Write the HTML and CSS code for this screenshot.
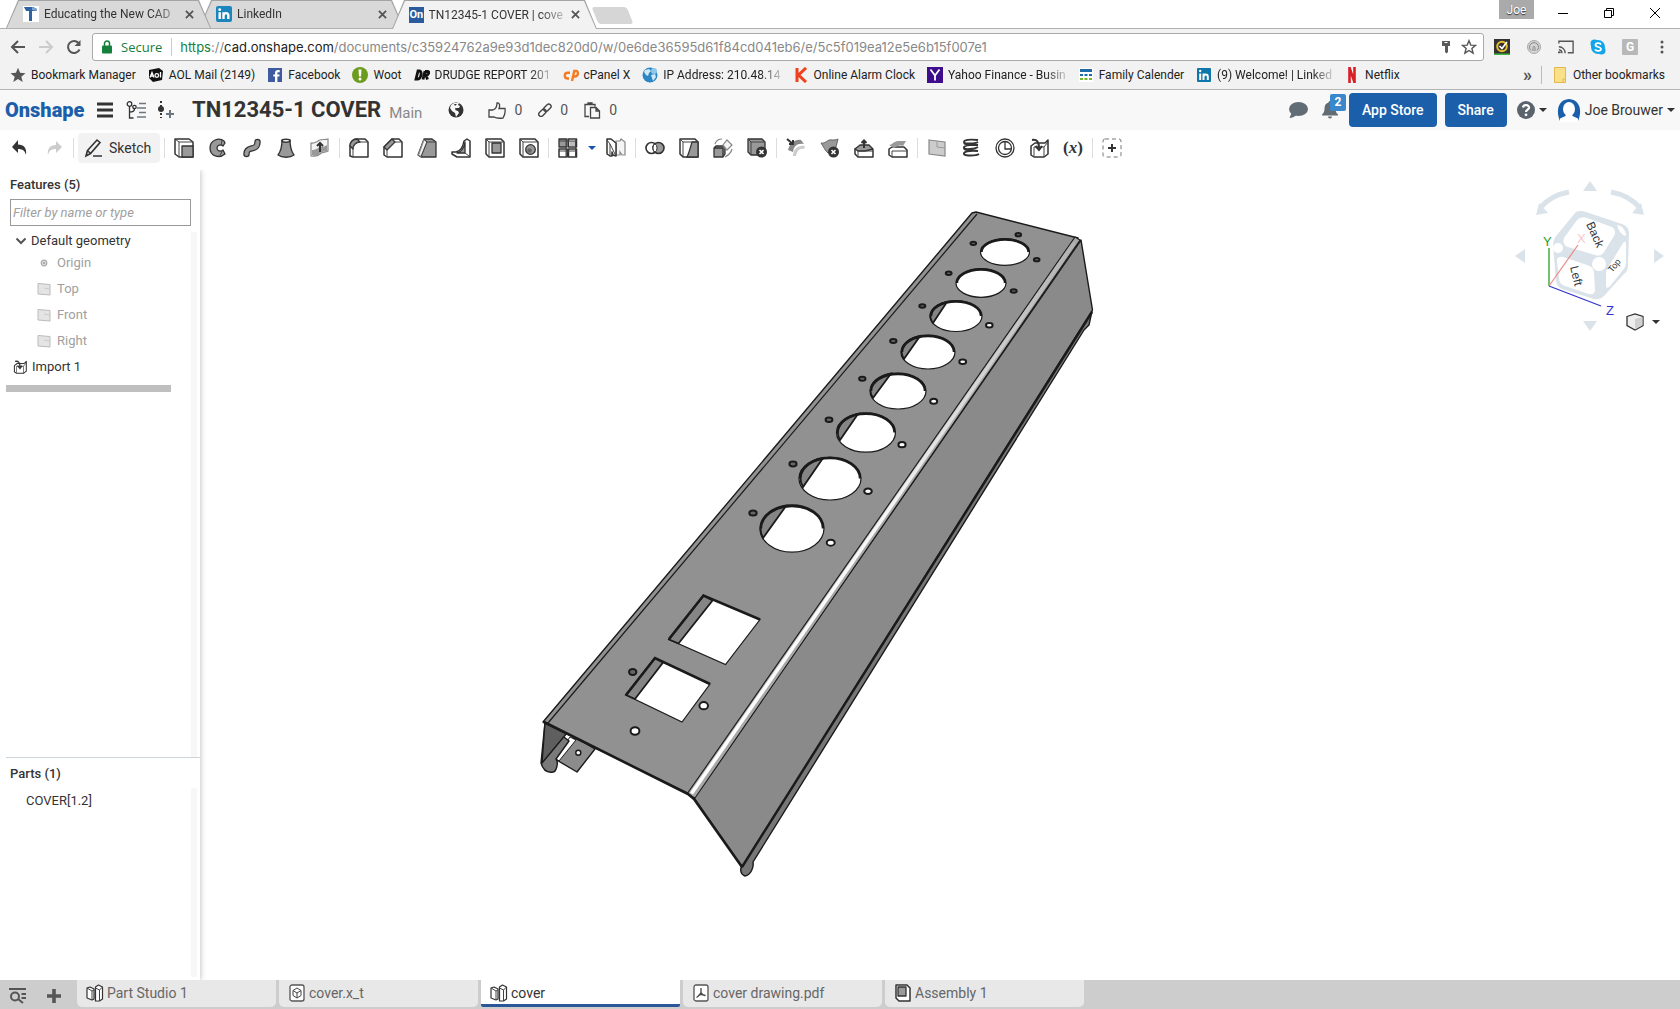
FILE: index.html
```html
<!DOCTYPE html>
<html lang="en">
<head>
<meta charset="utf-8">
<title>TN12345-1 COVER | cover</title>
<link rel="stylesheet" href="styles.css">
</head>
<body>
<header class="browser">
  <div class="tabstrip">
    <nav class="tabs" aria-label="Browser tabs">
      <div class="tab">
        <svg class="fav" viewBox="0 0 16 16"><path fill="#fff" d="M0 0h16v16H0z"/><path fill="#2d62a3" d="M1 1h9l4 2v2H9v10H6V5H3z"/><path fill="#7fa8d6" d="M9 1l5 2v2l-5-1z"/></svg>
        <a class="tab-title" href="#">Educating the New CAD</a><button class="tab-close" aria-label="Close tab"><svg viewBox="0 0 10 10"><path d="M1 1l8 8M9 1l-8 8"/></svg></button>
      </div>
      <div class="tab">
        <svg class="fav" viewBox="0 0 16 16"><rect width="16" height="16" rx="2" fill="#1b86bd"/><path fill="none" stroke="#fff" stroke-width="2.4" d="M3.7 6.3V13M7.5 6.3V13M7.5 10c0-4 4.800-3.500 4.800-.5V13"/><circle cx="3.700" cy="3.700" r="1.400" fill="#fff"/></svg>
        <a class="tab-title" href="#">LinkedIn</a><button class="tab-close" aria-label="Close tab"><svg viewBox="0 0 10 10"><path d="M1 1l8 8M9 1l-8 8"/></svg></button>
      </div>
      <div class="tab active">
        <span class="fav on">On</span>
        <a class="tab-title" href="#">TN12345-1 COVER | cove</a><button class="tab-close" aria-label="Close tab"><svg viewBox="0 0 10 10"><path d="M1 1l8 8M9 1l-8 8"/></svg></button>
      </div>
      <button class="newtab" aria-label="New tab"></button>
    </nav>
    <div class="window">
      <button class="profile">Joe</button>
      <button class="win" aria-label="Minimize"><svg viewBox="0 0 12 12"><path d="M1 6.500h10"/></svg></button>
      <button class="win" aria-label="Restore"><svg viewBox="0 0 12 12"><path d="M1.500 3.500h7v7h-7zM3.500 3V1.500h7v7H9"/></svg></button>
      <button class="win" aria-label="Close"><svg viewBox="0 0 12 12"><path d="M1 1l10 10M11 1L1 11"/></svg></button>
    </div>
  </div>
  <div class="navbar">
    <button class="nav" aria-label="Back"><svg viewBox="0 0 16 16"><path d="M15 8H2M8 2L2 8l6 6"/></svg></button>
    <button class="nav off" aria-label="Forward"><svg viewBox="0 0 16 16"><path d="M1 8h13M8 2l6 6-6 6"/></svg></button>
    <button class="nav" aria-label="Reload"><svg viewBox="0 0 16 16"><path d="M13.500 10.500A6 6 0 1 1 12.500 4"/><path class="solid" d="M14.500 1v6h-6z"/></svg></button>
    <div class="omnibox">
      <svg class="lock" viewBox="0 0 10 14"><rect y="5.500" width="10" height="8" rx="1" fill="#15803c"/><path d="M2.500 6V3.500a2.500 2.500 0 0 1 5 0V6" fill="none" stroke="#15803c" stroke-width="1.500"/></svg>
      <span class="secure">Secure</span>
      <span class="url"><span class="https">https</span>://<span class="host">cad.onshape.com</span>/documents/c35924762a9e93d1dec820d0/w/0e6de36595d61f84cd041eb6/e/5c5f019ea12e5e6b15f007e1</span>
      <svg class="key" viewBox="0 0 10 14"><path fill="#5a5a5a" d="M1 1h8v5H7v6l-1.500 1.500L4 12V6H1z"/><path stroke="#fff" d="M3.500 2.500h3"/></svg>
      <svg class="star" viewBox="0 0 16 16"><path fill="none" stroke="#555" stroke-width="1.400" d="M8 1.700l1.800 4.400 4.700.3-3.600 3 1.200 4.700L8 11.500l-4.100 2.600 1.200-4.700-3.600-3 4.700-.3z"/></svg>
    </div>
    <div class="exts">
      <svg viewBox="0 0 16 16"><path fill="#333" d="M0 0h16v16H0z"/><path fill="#3fb83f" d="M0 14.500h16V16H0z"/><circle cx="8" cy="7.500" r="4.800" fill="none" stroke="#e8c02a" stroke-width="2"/><path fill="none" stroke="#fff" stroke-width="1.700" d="M5.500 7l2.500 2.500L13 3"/></svg>
      <svg viewBox="0 0 16 16"><circle cx="8" cy="8" r="6.500" fill="#d4d4d4" stroke="#aaa"/><path fill="none" stroke="#888" d="M5 11.500a4.500 4.500 0 1 1 6 0M7 12V8.500a1 1 0 0 1 2 0V12"/></svg>
      <svg viewBox="0 0 18 16"><path fill="none" stroke="#555" stroke-width="1.500" d="M1 4V1.500h16v13h-6M1 11a4 4 0 0 1 3.500 4M1 7.700A7 7 0 0 1 8 15"/><path fill="#555" d="M0 13h1.500a1 1 0 0 1 1 2H0z"/></svg>
      <svg viewBox="0 0 16 16"><circle cx="8" cy="8" r="7" fill="#12a5e8"/><circle cx="4.500" cy="4.500" r="4" fill="#12a5e8"/><circle cx="11.500" cy="11.500" r="4" fill="#12a5e8"/><path fill="none" stroke="#fff" stroke-width="1.800" d="M11 5.500C10 3.500 5.500 3.700 5.500 6c0 2.500 5.500 1.500 5.500 4 0 2.300-5 2.500-6 .3"/></svg>
      <span class="ext-g">G</span>
      <svg viewBox="0 0 16 16"><g fill="#555"><circle cx="8" cy="3" r="1.500"/><circle cx="8" cy="8" r="1.500"/><circle cx="8" cy="13" r="1.500"/></g></svg>
    </div>
  </div>
  <nav class="bookmarks" aria-label="Bookmarks">
    <a href="#"><svg viewBox="0 0 16 16"><path fill="#555" d="M8 .8l2.100 5 5.400.4-4.200 3.500 1.400 5.300L8 12.100 3.300 15l1.400-5.300L.5 6.200l5.400-.4z"/></svg>Bookmark Manager</a>
    <a href="#"><svg viewBox="0 0 16 16"><path fill="#111" d="M1 3l10-2 4 3-1 9-9 2-4-4z"/><path fill="none" stroke="#fff" stroke-width="1.300" d="M2 10.500l2-5 2 5M3 9h2.500M12.500 5v5.500"/><circle cx="8.800" cy="8.500" r="1.800" fill="none" stroke="#fff" stroke-width="1.300"/></svg>AOL Mail (2149)</a>
    <a href="#"><svg viewBox="0 0 16 16"><path fill="#3f5ba0" d="M1 1h14v14H1z"/><path fill="#fff" d="M8 15V9.500H6.300v-2H8V6c0-2 1-3 3-3h1.700v2.200h-1.300c-.8 0-1 .4-1 1v1.300h2.200l-.3 2h-1.900V15z"/></svg>Facebook</a>
    <a href="#"><svg viewBox="0 0 16 16"><circle cx="8" cy="8" r="8" fill="#6b9c1d"/><path fill="#fff" d="M6.500 2.500h3L9 9.500H7z"/><circle cx="8" cy="12" r="1.500" fill="#fff"/></svg>Woot</a>
    <a href="#"><svg viewBox="0 0 16 16"><path fill="none" stroke="#111" stroke-width="2.800" d="M4 4L2 12h2c3 0 4.500-8 1.500-8zM11 4L9 12.500M11 4.500h2.500c2.500 0 1 3.500-1 3.500h-2M12 8l1.500 4.500"/></svg><span class="cut">DRUDGE REPORT 201</span></a>
    <a href="#"><svg viewBox="0 0 16 16"><path fill="none" stroke="#f47b20" stroke-width="2.400" d="M7 5.800H4.800c-4 0-4 5.700 0 5.700H6M9 14l2.300-10H13c3 0 2.500 5.500-1 5.500h-1"/></svg>cPanel X</a>
    <a href="#"><svg viewBox="0 0 16 16"><circle cx="8" cy="8" r="7.500" fill="#2c86c4"/><path fill="#cfe8f5" d="M3 3l4-1 2 2-2 2-1 3-2-1-2-3zM9 8l4-1 1 3-3 4-1-3z"/><circle cx="12" cy="4" r="3" fill="#8fc6ea"/></svg><span class="cut">IP Address: 210.48.14</span></a>
    <a href="#"><svg viewBox="0 0 16 16"><path fill="none" stroke="#f0401c" stroke-width="3" d="M4 1v14M13 1L5.500 8l7.500 7"/></svg>Online Alarm Clock</a>
    <a href="#"><svg viewBox="0 0 16 16"><path fill="#3d0d8c" d="M0 0h16v16H0z"/><path fill="none" stroke="#fff" stroke-width="1.800" d="M3.500 2.500L8 8.500l4.500-6M8 8v5.500"/></svg><span class="cut">Yahoo Finance - Busin</span></a>
    <a href="#"><svg viewBox="0 0 16 16"><path fill="#fff" d="M1 1h14v14H1z"/><path fill="#1c6aa8" d="M2 2h12v3H2z"/><path stroke="#1c6aa8" stroke-width="2" stroke-dasharray="3 1.500" d="M2 8h12"/><path stroke="#76b82a" stroke-width="2" stroke-dasharray="3 1.500" d="M2 12h12"/></svg>Family Calender</a>
    <a href="#"><svg viewBox="0 0 16 16"><rect x="1" y="1" width="14" height="14" rx="1" fill="#0e76a8"/><path fill="none" stroke="#fff" stroke-width="2" d="M4.200 6.500V13M7.500 6.500V13M7.500 10c0-3.500 4.300-3 4.300-.5V13"/><circle cx="4.200" cy="4" r="1.200" fill="#fff"/></svg><span class="cut">(9) Welcome! | Linked</span></a>
    <a href="#"><svg viewBox="0 0 16 16"><path fill="none" stroke="#d81f26" stroke-width="2.600" d="M5.500 0v16M10.500 0v16M5.200 0l5.600 16"/></svg>Netflix</a>
    <span class="more">»</span>
    <a class="other" href="#"><svg viewBox="0 0 16 16"><path fill="#fbe08a" stroke="#e3b94d" d="M2.500.5h11v15h-11zM11 15.500V12h2.500"/></svg>Other bookmarks</a>
  </nav>
</header>

<header class="doc">
  <a class="logo" href="#">Onshape</a>
  <button class="ib" aria-label="Menu"><svg width="18" height="18" viewBox="0 0 18 18"><path stroke="#333" stroke-width="3" d="M1 3h16M1 9h16M1 15h16"/></svg></button>
  <button class="ib" aria-label="Document tree"><svg width="20" height="18" viewBox="0 0 20 18"><g fill="none" stroke="#333" stroke-width="1.300"><circle cx="3.500" cy="3" r="2.300"/><path d="M3.500 5.500V17h4M3.500 11c4 0 5-1 5-3"/><circle cx="8.500" cy="6" r="1.700"/></g><path stroke="#6b7680" stroke-width="1.600" d="M13 2.500h7M11 7h9M13 11.500h7M11 16h9"/></svg></button>
  <button class="ib" aria-label="Create version"><svg width="18" height="20" viewBox="0 0 18 20"><path stroke="#333" stroke-width="2" stroke-dasharray="2 2" d="M3 1v17"/><circle cx="3" cy="9" r="3" fill="#333"/><path stroke="#6b7680" stroke-width="2" d="M8 14h8M12 10v8"/></svg></button>
  <h1>TN12345-1 COVER</h1><span class="branch">Main</span>
  <svg class="globe" viewBox="0 0 16 16"><circle cx="8" cy="8" r="7.500" fill="#333"/><path fill="#f8f8f8" d="M6 1l5 0-1 2 2 1-1 2-2 0-2 2 3 1 1 2-3 4-1-4-3-2-2-3 1-3z"/><path fill="#333" d="M6 2l3 0-2 2zM7 6l2 0-1 2z"/></svg>
  <div class="stat"><svg width="18" height="17" viewBox="0 0 18 17"><path fill="none" stroke="#444" stroke-width="1.300" d="M1 8h4c3-1 4-4 4-7 3-.5 3 3 2 5.500h6c.5 3-.5 7-2 9.500-4 .5-7 .3-9-1H1z"/></svg>0</div>
  <div class="stat"><svg width="14" height="14" viewBox="0 0 14 14"><g fill="none" stroke="#444" stroke-width="1.400" transform="rotate(-45 7 7)"><rect x="-1" y="4.800" width="8.500" height="4.600" rx="2.300"/><rect x="6" y="4.800" width="8.500" height="4.600" rx="2.300"/></g></svg>0</div>
  <div class="stat"><svg width="17" height="17" viewBox="0 0 17 17"><path fill="none" stroke="#444" stroke-width="1.300" d="M5 14.500H1v-12h10v2M4 2.500V1h4v1.500M6.500 5.500h5.500l3.500 3.500v7h-9zM12 5.500V9h3.500"/></svg>0</div>
  <div class="account">
    <button class="ib" aria-label="Comments"><svg width="20" height="18" viewBox="0 0 20 18"><ellipse cx="10.500" cy="8" rx="9.500" ry="7" fill="#626c75"/><path fill="#626c75" d="M4 11l-2.500 6c3 0 5.500-1.500 7-3z"/></svg></button>
    <button class="ib bell" aria-label="Notifications"><svg width="18" height="18" viewBox="0 0 18 18"><path fill="#626c75" d="M7.500 1.500a1.500 1.500 0 0 1 3 0c3 1 4 3 4 6 0 3.500 1 4.500 2.500 6v1H1v-1c1.500-1.500 2.500-2.500 2.500-6 0-3 1-5 4-6zM7 15.500h4a2 2 0 0 1-4 0z"/></svg><span class="badge">2</span></button>
    <button class="blue">App Store</button>
    <button class="blue share">Share</button>
    <button class="ib help" aria-label="Help"><svg width="18" height="18" viewBox="0 0 18 18"><circle cx="9" cy="9" r="9" fill="#5b646c"/><path fill="none" stroke="#fff" stroke-width="2.200" d="M6 6.500c.5-3.500 6.500-3 6 .5-.3 1.500-3 2-3 4"/><circle cx="9" cy="13.800" r="1.400" fill="#fff"/></svg><i class="caret"></i></button>
    <button class="ib user"><svg width="24" height="24" viewBox="0 0 24 24"><path fill="#1b5faa" d="M3 23C-1 14 0 2 12 1c12 1 13 13 9 22z"/><ellipse cx="12" cy="11" rx="6" ry="7" fill="#fff"/><path fill="#fff" d="M9 15h6l.5 3 5.500 2.500V24H3v-3.500L8.500 18z"/></svg>Joe Brouwer<i class="caret"></i></button>
  </div>
</header>

<div class="toolbar" role="toolbar" aria-label="Features">
  <button aria-label="Undo"><svg viewBox="0 0 20 20"><path fill="#333" d="M8 2v4.500c6 0 9 4 8 10.500-1-4-3-6-8-6v4L2 9z"/></svg></button>
  <button aria-label="Redo"><svg viewBox="0 0 20 20"><path fill="#ccc" d="M12 3v4c-6 0-9 4-8 10 1-4 3-6 8-6v4l6-6z"/></svg></button>
  <i class="sep"></i>
  <button class="sketch"><svg viewBox="0 0 20 20"><path fill="none" stroke="#333" stroke-width="1.600" d="M3.500 12.500L13 2l3 2.500-9.500 11L2 18zM3.500 12.500l3 3M9 18h9"/></svg>Sketch</button>
  <i class="sep"></i>
  <button aria-label="Extrude"><svg viewBox="0 0 20 20"><path class="o" d="M1 1h14l4 3v15H5l-4-3z"/><path class="l" d="M1 1l4 3h14M5 4v15"/><path class="g" d="M8 8h11v11H8z"/></svg></button>
  <button aria-label="Revolve"><svg viewBox="0 0 20 20"><path class="g" d="M16 3C11-1 2 2 2 10s9 11 15 6l-2-4c-3 2-6 1-6-2s4-4 6-2l2-3z"/><path class="l" d="M14 2l-1 6M15 12l-3 5"/></svg></button>
  <button aria-label="Sweep"><svg viewBox="0 0 20 20"><path fill="none" stroke="#333" stroke-width="6.500" stroke-linecap="round" d="M4.500 16c0-9 11-2 11-12"/><path fill="none" stroke="#999" stroke-width="4" stroke-linecap="round" d="M4.500 16c0-9 11-2 11-12"/></svg></button>
  <button aria-label="Loft"><svg viewBox="0 0 20 20"><path class="g" d="M6 2h8c0 6 1 11 4 15-4 3-12 3-16 0C5 13 6 8 6 2z"/><ellipse class="o" cx="10" cy="2.800" rx="4" ry="1.500"/></svg></button>
  <button aria-label="Thicken"><svg viewBox="0 0 20 20"><path class="w" d="M1 5c4 1 6-2 9-3s5 0 8-1v12c-3 2-5 0-8 3s-5 2-9 2z"/><path fill="#999" d="M2 12c4 0 5-2 8-3s5 0 7-2v6c-3 1-5 0-8 3s-4 2-7 1z"/><path class="k" d="M10 14V6M7 8l3-3 3 3"/></svg></button>
  <i class="sep"></i>
  <button aria-label="Fillet"><svg viewBox="0 0 20 20"><path class="o" d="M1 18V8c0-4 3-7 7-7h8l3 3v15H4z"/><path class="g" d="M1 8c0-4 3-7 7-7l3 3c-4 0-7 3-7 7z"/><path class="l" d="M4 19v-8c0-4 3-7 7-7h8"/></svg></button>
  <button aria-label="Chamfer"><svg viewBox="0 0 20 20"><path class="o" d="M1 17V9l8-8h7l3 3v15H4z"/><path class="g" d="M1 9l8-8 3 3-8 8z"/><path class="l" d="M4 19v-7l8-8h7"/></svg></button>
  <button aria-label="Draft"><svg viewBox="0 0 20 20"><path class="g" d="M1 17L7 1h8l4 3v15H4z"/><path class="w" d="M1.500 17L7 1.500 10 4 4 18.500z"/><path class="l" d="M7 1l3 3h9M10 4L4 19"/></svg></button>
  <button aria-label="Rib"><svg viewBox="0 0 20 20"><path class="o" d="M1 14h4c5-1 7-5 8-11l3-2 3 2v16H6l-5-3z"/><path class="g" d="M6 15c5-1 7-5 8-11v11z"/><path class="l" d="M14 15l4 3"/></svg></button>
  <button aria-label="Shell"><svg viewBox="0 0 20 20"><path class="o" d="M1 1h15l3 3v15H4l-3-3z"/><path class="l" d="M1 1l3 3h15M4 4v15"/><path class="g" d="M7 5h9v10H7z"/></svg></button>
  <button aria-label="Hole"><svg viewBox="0 0 20 20"><path class="o" d="M1 1h15l3 3v15H4l-3-3z"/><path class="l" d="M1 1l3 3h15M4 4v15"/><circle class="g" cx="11.500" cy="11.500" r="4.800"/><circle cx="10.500" cy="12.500" r="2.300" fill="#666"/></svg></button>
  <i class="sep"></i>
  <button aria-label="Pattern"><svg viewBox="0 0 20 20"><path class="g" d="M1 1h8v8H1z"/><path class="o" d="M10.500 1h8v8h-8zM1 11h8v8H1zM10.500 11h8v8h-8z"/><path fill="#bbb" d="M12 3h6v5h-6z"/><path class="l" d="M1 3h18M1 13h18M8 2v17M17.500 2v17"/></svg></button>
  <button class="drop" aria-label="More patterns"><i class="caret"></i></button>
  <button aria-label="Mirror"><svg viewBox="0 0 20 20"><path class="w" d="M10 3h4l1-2 4 3v13h-3l-2-3v3h-4z"/><path class="o" d="M1 1h4l5 4v13l-3-1-1-3v4H4l-3-2z"/><path class="l" d="M4 17V6l6 12M1 2l3 4"/></svg></button>
  <i class="sep"></i>
  <button aria-label="Boolean"><svg viewBox="0 0 20 20"><circle cx="6.500" cy="10" r="5.500" fill="#fff" stroke="#333" stroke-width="1.600"/><circle cx="13.500" cy="10" r="5.500" fill="#999" stroke="#333" stroke-width="1.600"/><path d="M10 5.700a5.500 5.500 0 0 1 0 8.600 5.500 5.500 0 0 1 0-8.600" fill="#fff" stroke="#333"/></svg></button>
  <button aria-label="Split"><svg viewBox="0 0 20 20"><path class="o" d="M1 1h15l3 3v15H4l-3-3z"/><path class="g" d="M13 4h6v15H8c2-4 3-8 5-15z"/><path class="l" d="M1 1l3 3h15M4 4v15"/></svg></button>
  <button aria-label="Transform"><svg viewBox="0 0 20 20"><path fill="none" stroke="#888" stroke-width="1.200" d="M2 6c1-3 3-5 7-5M19 11c-1 4-3 6-7 8"/><path class="g" d="M1 10h9v9H1zM1 10l2-2h9v8l-2 3"/><path class="w" d="M14 2l5 5-5 5-4-5z"/></svg></button>
  <button aria-label="Delete part"><svg viewBox="0 0 20 20"><path class="g" d="M1 1h14l3 3v13H4l-3-3z"/><path class="l" d="M1 1l3 3h14M4 4v13"/><circle cx="14.500" cy="14" r="5.500" fill="#333"/><path class="x" d="M12.500 12l4 4M16.500 12l-4 4"/></svg></button>
  <i class="sep"></i>
  <button aria-label="Modify fillet"><svg viewBox="0 0 20 20"><path fill="#888" d="M2 12C4 5 9 1 15 2l3 4C11 5 8 8 7 14z"/><path fill="#ccc" d="M7 18c0-7 5-11 12-10l-1 3c-5-1-7 2-8 7z"/><path class="k" d="M1 1l6 5M7 2v4H3"/></svg></button>
  <button aria-label="Delete face"><svg viewBox="0 0 20 20"><path fill="#999" stroke="#666" d="M1 5c5 1 6-4 11-3 2 0 4 0 6-1l-2 8-8 6C5 13 4 9 1 5z"/><circle cx="13.500" cy="14" r="5.500" fill="#333"/><path class="x" d="M11.500 12l4 4M15.500 12l-4 4"/></svg></button>
  <button aria-label="Move face"><svg viewBox="0 0 20 20"><path class="o" d="M1 11l5-2h9l4 3v7H4l-3-3z"/><path class="g" d="M1 11l5-4h9l4 4-8 2-7 0z"/><path class="k" d="M10 10V3M7.500 5L10 2.500 12.500 5"/><path class="l" d="M4 13h15M4 13v6"/></svg></button>
  <button aria-label="Replace face"><svg viewBox="0 0 20 20"><path class="o" d="M1 11l3-2h12l3 3v7H4l-3-2z"/><path fill="#999" d="M1 7c3 0 5-4 9-4h8l-3 5c-4-1-6 0-9 2z"/><path class="l" d="M4 13h15M4 13v6"/></svg></button>
  <i class="sep"></i>
  <button aria-label="Plane"><svg viewBox="0 0 20 20"><path fill="#ccc" stroke="#888" stroke-width="1.200" d="M2 2l16 2v14L2 16z"/><path fill="none" stroke="#999" d="M10 3v6l8 1"/></svg></button>
  <button aria-label="Helix"><svg viewBox="0 0 20 20"><path fill="none" stroke="#333" stroke-width="1.900" d="M17 2C8 1 3 2 3 4s11 2 14 0M3 4c0 3 3 3 14 3C8 6 2 8 3 10s11 1 14-1M3 10c0 3 5 2 14 3-9-1-15 1-14 3s12 2 15 0"/></svg></button>
  <button aria-label="Mate connector"><svg viewBox="0 0 20 20"><g fill="none" stroke="#333" stroke-width="1.300"><circle cx="10" cy="10" r="9"/><circle cx="10" cy="10" r="6.500"/><path d="M10 4v7h6"/></g></svg></button>
  <button aria-label="Import"><svg viewBox="0 0 20 20"><path class="o" d="M2 8l4-3h10l3-3v14l-4 3H5l-3-2z"/><path class="l" d="M5 18V9h10v10M15 9l4-5"/><path class="k" d="M3 2c5-1 7 2 7 8M6.500 8l3.500 4 3-4"/></svg></button>
  <button class="var" aria-label="Variable">(<i>x</i>)</button>
  <i class="sep"></i>
  <button aria-label="Add custom feature"><svg viewBox="0 0 20 20"><rect x="1" y="1" width="18" height="18" rx="2" fill="none" stroke="#777" stroke-dasharray="4 3"/><path stroke="#333" stroke-width="2" d="M10 6v8M6 10h8"/></svg></button>
</div>

<main class="work">
  <aside class="panel">
    <section class="features">
      <h2><label for="filter">Features (5)</label></h2>
      <input id="filter" type="text" placeholder="Filter by name or type">
      <div class="scroll">
        <ul class="tree">
          <li class="root"><svg viewBox="0 0 12 12"><path fill="none" stroke="#555" stroke-width="2" d="M1.500 3.500L6 8l4.500-4.500"/></svg>Default geometry</li>
          <li class="leaf"><svg viewBox="0 0 14 14"><circle cx="7" cy="7" r="2.800" fill="#ddd" stroke="#aaa" stroke-width="1.200"/><circle cx="7" cy="7" r="1" fill="#999"/></svg>Origin</li>
          <li class="leaf"><svg viewBox="0 0 14 14"><path fill="#e4e4e4" stroke="#bbb" d="M1 1.500l12 1v10.500l-12-1z"/><path stroke="#ccc" d="M7 6l6 1"/></svg>Top</li>
          <li class="leaf"><svg viewBox="0 0 14 14"><path fill="#e4e4e4" stroke="#bbb" d="M1 1.500l12 1v10.500l-12-1z"/><path stroke="#ccc" d="M7 6l6 1"/></svg>Front</li>
          <li class="leaf"><svg viewBox="0 0 14 14"><path fill="#e4e4e4" stroke="#bbb" d="M1 1.500l12 1v10.500l-12-1z"/><path stroke="#ccc" d="M7 6l6 1"/></svg>Right</li>
          <li class="import"><svg viewBox="0 0 20 20"><path class="o" d="M2 8l4-3h10l3-3v14l-4 3H5l-3-2z"/><path class="l" d="M5 18V9h10v10M15 9l4-5"/><path class="k" d="M3 2c5-1 7 2 7 8M6.500 8l3.500 4 3-4"/></svg>Import 1</li>
        </ul>
        <div class="rollback"></div>
      </div>
    </section>
    <section class="parts">
      <h2>Parts (1)</h2>
      <div class="scroll"><ul><li>COVER[1.2]</li></ul></div>
    </section>
  </aside>

  <section class="view" aria-label="Model">
    <svg class="model" viewBox="200 170 1480 809" preserveAspectRatio="xMinYMin meet">
      <defs>
        <linearGradient id="bend" gradientUnits="userSpaceOnUse" x1="691" y1="796" x2="1079" y2="238"><stop offset="0" stop-color="#fff"/><stop offset=".5" stop-color="#f6f6f6"/><stop offset=".75" stop-color="#d4d4d4"/><stop offset="1" stop-color="#b0b0b0"/></linearGradient>
      </defs>
      <g stroke="#1a1a1a" stroke-width="1.400" stroke-linejoin="round">
        <path fill="#8c8c8c" d="M575 737l20 12-18 23-22-13z"/>
        <path fill="#fff" d="M570 737l6 3-17 21-4-3z" stroke-width="1"/>
        <circle cx="578.300" cy="752.700" r="2.500" fill="#fff"/>
        <path fill="#7a7a7a" d="M545 722l-4 41c2 7 6 10 12 9 3 0 6-9 3-13l13-18z"/>
        <path fill="#5f5f5f" d="M545 723l22 10-25 30z"/>
        <path fill="#777" d="M1092 311l-3 14-5 5-331 532c1 5-2 13-8 14-5-2-5-7-3-10z"/>
        <path fill="#8a8a8a" d="M694 798L1081 240l11.500 70L742 867z"/>
        <path fill="none" stroke-width="2.400" d="M742 867L1092 312"/>
        <path fill="#919191" d="M543 722L972 213l4-1 102 26-389 556z"/>
        <path fill="none" stroke-width="1.200" d="M548 723L977 214"/>
        <path fill="#a8a8a8" stroke-width="1.100" d="M687 794L1075 237l5 3-385 558z"/>
        <path fill="none" stroke="url(#bend)" stroke-width="3.600" d="M691.500 793.500L1074 243"/>
        <path fill="none" stroke-width="2.600" d="M544 722l144 72 6 5 48 68"/>
      </g>
      <g fill="#fff" stroke="#1a1a1a" stroke-width="1.200">
        <ellipse cx="1005" cy="252" rx="24.500" ry="13.300"/>
        <ellipse cx="981" cy="283" rx="25" ry="14.300"/>
        <ellipse cx="956" cy="316" rx="26" ry="15.500"/>
        <ellipse cx="928" cy="352" rx="27" ry="17"/>
        <ellipse cx="898" cy="391" rx="28" ry="18"/>
        <ellipse cx="866" cy="432.500" rx="29.500" ry="19.700"/>
        <ellipse cx="830" cy="478.500" rx="31" ry="21.500"/>
        <ellipse cx="792" cy="528.500" rx="32" ry="23.700"/>
      </g>
      <g fill="#858585" stroke="#1a1a1a" stroke-width="1.800">
        <path d="M933 323A26 15.500 0 0 1 947 302z"/>
        <path d="M904 359A27 17 0 0 1 920 336z"/>
        <path d="M873 398A28 18 0 0 1 891 373.500z"/>
        <path d="M840 440A29.500 19.700 0 0 1 858 414z"/>
        <path d="M803 487A31 21.500 0 0 1 823 458z"/>
        <path d="M763 538A32 23.700 0 0 1 786 506z"/>
      </g>
      <g fill="none" stroke="#1a1a1a" stroke-width="2.400">
        <path d="M981.500 252a23.500 12.500 0 0 1 47 0"/>
        <path d="M957 283a24 13.500 0 0 1 48 0"/>
        <path d="M931 316a25 14.500 0 0 1 50 0"/>
        <path d="M902 352a26 16 0 0 1 52 0"/>
        <path d="M871 391a27 17 0 0 1 54 0"/>
        <path d="M837.500 432.500a28.500 18.700 0 0 1 57 0"/>
        <path d="M800 478.500a30 20.500 0 0 1 60 0"/>
        <path d="M761 528.500a31 22.500 0 0 1 62 0"/>
      </g>
      <g fill="#fff" stroke="#1a1a1a">
        <path stroke-width="1.200" d="M703.500 595.500L760 619.500l-34.500 45L669 639.500zM655 658l55 26-28 38-56-27z"/>
        <g fill="#858585" stroke-width="1.800"><path d="M703.500 595.500l9 5L678.500 643.500l-9.500-4zM655 658l8 4.500L635 699l-9-4z"/></g>
        <path fill="none" stroke-width="2.600" d="M669 639l34.500-43.500L760 619.500M626 695l29-37 55 26"/>
      </g>
      <g fill="#666" stroke="#1a1a1a" stroke-width="2">
        <ellipse cx="1018.300" cy="234.700" rx="2.800" ry="1.600"/><ellipse cx="973.300" cy="243.300" rx="2.800" ry="1.600"/><ellipse cx="1036.700" cy="259.700" rx="2.800" ry="1.600"/><ellipse cx="948.700" cy="273.300" rx="2.900" ry="1.700"/><ellipse cx="1013.700" cy="291" rx="3" ry="1.800"/><ellipse cx="922.300" cy="306" rx="3" ry="1.800"/><ellipse cx="893.300" cy="341" rx="3.200" ry="2"/><ellipse cx="862.300" cy="378.700" rx="3.200" ry="2"/><ellipse cx="829" cy="419.700" rx="3.400" ry="2.200"/><ellipse cx="793" cy="464" rx="3.600" ry="2.400"/><ellipse cx="753" cy="513" rx="3.700" ry="2.500"/><ellipse cx="632.700" cy="672" rx="3.700" ry="3"/>
        <g fill="#fff"><ellipse cx="989.300" cy="325.300" rx="3.300" ry="2.200"/><ellipse cx="962.700" cy="361.700" rx="3.400" ry="2.300"/><ellipse cx="933.700" cy="401.300" rx="3.500" ry="2.500"/><ellipse cx="902" cy="444.700" rx="3.600" ry="2.600"/><ellipse cx="868" cy="491.300" rx="3.800" ry="2.800"/><ellipse cx="830.700" cy="542.700" rx="4" ry="3"/><ellipse cx="703.700" cy="705.700" rx="4.300" ry="3.600"/><ellipse cx="635" cy="731" rx="4.400" ry="3.800"/></g>
      </g>
    </svg>
    <div class="cube">
      <svg viewBox="0 0 180 180">
        <g fill="#dbe3ea"><path d="M90 11l7 10H83zM90 161l7-10H83zM15 86l10-7v14zM164 86l-10-7v14zM36 45l3-12 9 10zM144 45l-3-12-9 10z"/></g>
        <path fill="none" stroke="#dbe3ea" stroke-width="5" d="M41 37c7-8 17-13 28-15M139 37c-7-8-17-13-28-15"/>
        <path fill="#dbe3ea" d="M76 42q4-2 10 0l36 12q6 2 7 8l-1 34q0 5-4 8l-20 22q-4 4-10 3l-32-10q-5-2-6-8l-3-36q0-5 3-9z"/>
        <g fill="#fff"><path d="M77 50q4-4 10-2l25 9q5 3 2 9l-10 16q-3 5-9 3l-27-8q-6-2-4-9z"/><path d="M57 91q0-5 6-4l24 8q7 2 7 8l1 17q0 5-6 4l-24-8q-6-2-6-8z"/><path d="M109 96l14-23q3-4 3 2v18q0 4-3 7l-12 15q-5 6-5 0v-12q0-4 3-7z"/><circle cx="99" cy="94" r="7"/><circle cx="58" cy="78" r="5"/><path d="M117 55q8 1 9 11-7-2-9-11z"/></g>
        <text class="ax" x="77" y="73" fill="#f8c8c8">X</text>
        <g class="face"><text transform="translate(86 54) rotate(66)">Back</text><text transform="translate(70 97) rotate(76)">Left</text><text class="small" transform="translate(112 103) rotate(-50)">Top</text></g>
        <path stroke="#25a025" stroke-width="1.300" d="M49 116V78"/><path stroke="#e88" stroke-width="1.200" d="M49 116l29-41"/><path stroke="#33c" stroke-width="1.300" d="M49 116l52 20"/>
        <text class="ax" x="43" y="76" fill="#25a025">Y</text><text class="ax" x="106" y="145" fill="#33c">Z</text>
      </svg>
      <button class="shade" aria-label="View options"><svg width="18" height="18" viewBox="0 0 18 18"><path fill="#eee" stroke="#333" stroke-width="1.300" d="M1 3.500L9 1l8 2.500v9L9 17l-8-4.500z"/><path fill="#d0d0d0" d="M9 6l7.500-2v8.300L9 16.500z"/></svg><i class="caret"></i></button>
    </div>
  </section>
</main>

<footer class="sheets">
  <button class="ib" aria-label="Find tab"><svg width="18" height="17" viewBox="0 0 18 17"><g fill="none" stroke="#555" stroke-width="2"><path d="M0 2h17M12.500 7H17M12.500 11H17M9 12l5 4"/><circle cx="6" cy="9.500" r="4"/></g></svg></button>
  <button class="ib plus" aria-label="New tab"><svg width="14" height="14" viewBox="0 0 14 14"><path stroke="#555" stroke-width="3.600" d="M7 0v14M0 7h14"/></svg></button>
  <a class="sheet" href="#"><svg viewBox="0 0 18 18"><path class="p" d="M1 4l3-1 4 2v10l-2 1-5-2zM9.500 3l3-2 4 2v12l-3 2h-4z"/><path class="l" d="M1 4l5 3v9M6 7l2-1M13.500 17V6l3-3M13.500 6l-4-2"/></svg>Part Studio 1</a>
  <a class="sheet" href="#"><svg viewBox="0 0 18 18"><rect class="w2" x="2" y="1" width="14" height="16" rx="2"/><path class="l" d="M9 4l4 2.500v5L9 14l-4-2.500v-5zM5 6.500L9 9l4-2.500M9 9v5"/></svg>cover.x_t</a>
  <a class="sheet current" href="#"><svg viewBox="0 0 18 18"><path class="p" d="M1 4l3-1 4 2v10l-2 1-5-2zM9.500 3l3-2 4 2v12l-3 2h-4z"/><path class="l" d="M1 4l5 3v9M6 7l2-1M13.500 17V6l3-3M13.500 6l-4-2"/></svg>cover</a>
  <a class="sheet" href="#"><svg viewBox="0 0 18 18"><rect class="w2" x="2" y="1" width="14" height="16" rx="2"/><path fill="none" stroke="#444" stroke-width="1.300" d="M9 4v4.500c-1 2-2.500 4-4.500 5M9 8.500c1 2 2.500 3 4.500 3M6 11.500c2-1 4-1 6-.5"/></svg>cover drawing.pdf</a>
  <a class="sheet" href="#"><svg viewBox="0 0 18 18"><path class="o" d="M2 1h11l3 3v13H5l-3-3z"/><path class="g" d="M4 3h8v9H4z"/></svg>Assembly 1</a>
</footer>
</body>
</html>
```
FILE: styles.css
```css
* { box-sizing: border-box; }
body {
  margin: 0;
  min-height: 100vh;
  display: flex;
  flex-direction: column;
  background: #fff;
  color: #333;
  font: 14px/18px Roboto, "Liberation Sans", sans-serif;
}
a { color: inherit; text-decoration: none; }
button { border: 0; background: none; padding: 0; color: inherit; font: inherit; display: flex; align-items: center; justify-content: center; }
h1, h2, ul { margin: 0; padding: 0; font-size: inherit; list-style: none; }
svg { display: block; flex: none; }

.o { fill: #fff; stroke: #333; stroke-width: 1.5; stroke-linejoin: round; }
.p { fill: #fff; stroke: #333; stroke-width: 1.2; stroke-linejoin: round; }
.g { fill: #999; stroke: #333; stroke-width: 1.3; stroke-linejoin: round; }
.l { fill: none; stroke: #444; stroke-width: 1; }
.w { fill: #f4f4f4; stroke: #888; stroke-width: 1.2; }
.w2 { fill: #fff; stroke: #555; stroke-width: 1.3; }
.k { fill: none; stroke: #333; stroke-width: 2; }
.x { fill: none; stroke: #fff; stroke-width: 1.6; }
.caret { display: block; border: 5px solid transparent; border-top-color: #333; border-bottom: 0; }

/* browser window */
.browser { background: #f2f2f2; border-bottom: 1px solid #b4b4b4; font-size: 12px; }
.tabstrip { display: flex; justify-content: space-between; height: 29px; background: #fff; border-bottom: 1px solid #b0b0b0; padding: 0 2px 0 6px; }
.tabs { display: flex; }
.tab { position: relative; width: 205px; height: 28px; margin-right: -12px; padding: 0 17px; display: flex; align-items: center; background: #a4a4a4; clip-path: polygon(0 100%, 12px 0, 193px 0, 100% 100%); }
.tab::before { content: ""; position: absolute; inset: 1px 1px 0; background: #d9d9d9; clip-path: polygon(0 100%, 12px 0, 191px 0, 100% 100%); }
.tab > * { position: relative; }
.tab:nth-child(1) { z-index: 1; }
.tab.active { z-index: 2; height: 29px; }
.tab.active::before { background: #f2f2f2; }
.fav { width: 16px; height: 16px; }
.on { background: #2a5b9e; color: #fff; font-weight: 700; line-height: 16px; text-align: center; font-size: 11px; }
.tab-title { flex: 1; margin-left: 5px; white-space: nowrap; mask-image: linear-gradient(90deg, #000 82%, rgba(0, 0, 0, .3)); }
.tab-close { width: 10px; height: 16px; margin-left: 8px; }
.tab-close svg { width: 9px; stroke: #555; stroke-width: 2; }
.newtab { width: 35px; height: 17px; margin: 7px 0 0 10px; background: #d6d6d6; border-radius: 3px; transform: skewX(22deg); }
.window { display: flex; align-items: flex-start; }
.profile { width: 35px; height: 19px; margin-right: 6px; background: #aaa; color: #fff; text-shadow: 0 1px 1px #333; }
.win { width: 46px; height: 26px; }
.win svg { width: 12px; fill: none; stroke: #000; stroke-width: 1; }

.navbar { display: flex; align-items: center; height: 36px; padding: 0 10px 0 4px; }
.nav { width: 28px; height: 28px; }
.nav svg { width: 16px; fill: none; stroke: #555; stroke-width: 2; }
.nav .solid { fill: #555; stroke: none; }
.nav.off svg { stroke: #ccc; }
.omnibox { flex: 1; display: flex; align-items: center; height: 28px; margin-left: 4px; padding: 0 6px 0 9px; background: #fff; border: 1px solid #aaa; border-radius: 3px; font: 13px/18px Inter, sans-serif; color: #888; }
.lock { width: 10px; height: 14px; }
.secure { margin-left: 9px; padding-right: 9px; border-right: 1px solid #ccc; color: #15803c; font-family: "Open Sans", sans-serif; }
.url { flex: 1; margin-left: 8px; white-space: nowrap; overflow: hidden; }
.https { color: #15803c; }
.host { color: #222; }
.key { width: 10px; height: 14px; margin-right: 10px; }
.star { width: 16px; height: 16px; }
.exts { display: flex; align-items: center; gap: 16px; margin-left: 10px; }
.exts svg { width: 16px; height: 16px; }
.ext-g { width: 16px; height: 16px; background: #b8b8b8; color: #fff; font-weight: 700; line-height: 16px; text-align: center; border-radius: 1px; }

.bookmarks { display: flex; align-items: center; height: 24px; padding: 0 15px 5px 10px; gap: 12px; }
.bookmarks a { display: flex; align-items: center; gap: 5px; white-space: nowrap; color: #222; }
.bookmarks svg { width: 16px; height: 16px; }
.cut { min-width: 115px; mask-image: linear-gradient(90deg, #000 82%, rgba(0, 0, 0, .2)); }
.more { margin-left: auto; font-size: 18px; font-weight: 700; color: #555; }
.bookmarks .other { border-left: 1px solid #bbb; padding-left: 10px; margin-left: -3px; }

/* document header */
.doc { display: flex; align-items: center; height: 40px; padding: 0 5px; background: #f8f8f8; }
.logo { width: 91px; font-size: 20px; font-weight: 900; color: #1b5faa; }
.doc > .ib { margin-right: 12px; }
.doc h1 { margin-left: 4px; font-size: 22px; line-height: 26px; font-weight: 700; white-space: nowrap; }
.branch { margin: 6px 26px 0 8px; font-size: 15px; color: #888; }
.globe { width: 16px; height: 16px; margin-right: 16px; }
.stat { display: flex; align-items: center; gap: 8px; margin: 0 16px 0 8px; color: #555; }
.stat + .stat { margin-left: 0; }
.account { display: flex; align-items: center; margin-left: auto; }
.bell { position: relative; margin: 0 10px 0 13px; }
.badge { position: absolute; left: 9px; top: -7px; width: 16px; height: 17px; background: #3a87cc; color: #fff; font-size: 12px; font-weight: 700; line-height: 17px; border-radius: 2px; }
.blue { height: 34px; padding: 0 13px; background: #1b5faa; color: #fff; font-weight: 500; border-radius: 4px; white-space: nowrap; }
.share { margin-left: 8px; }
.help { gap: 4px; margin-left: 10px; }
.user { gap: 4px; margin-left: 10px; white-space: nowrap; }
.help .caret, .user .caret { border-width: 4px 4px 0; }

.toolbar { display: flex; align-items: center; height: 36px; padding-left: 3px; }
.toolbar > button { width: 34px; height: 30px; flex: none; }
.toolbar svg { width: 20px; height: 20px; }
.toolbar .sep { width: 1px; height: 20px; margin: 0 2px; background: #ddd; }
.toolbar > .sketch { width: 82px; margin: 0 2px; padding-left: 6px; gap: 5px; justify-content: flex-start; background: #f2f2f2; border-radius: 4px; }
.toolbar > .drop { width: 14px; }
.drop .caret { border-width: 4px 4px 0; border-top-color: #1b4fb0; }
.var { font: 700 17px/20px "Liberation Serif", serif; }

/* workspace */
.work { flex: 1; display: flex; min-height: 600px; padding-top: 4px; }
.panel { width: 200px; flex: none; display: flex; flex-direction: column; background: #fff; box-shadow: 0 0 6px rgba(0, 0, 0, .3); font-size: 13px; z-index: 1; clip-path: inset(0 -8px 0 0); }
.panel h2 { font-size: 13px; font-weight: 500; line-height: 18px; }
.features { flex: 1; display: flex; flex-direction: column; padding: 6px 3px 0 6px; }
.features h2 { margin-left: 4px; }
.features input { width: 181px; height: 27px; margin: 5px 0 6px 4px; padding: 0 2px; border: 1px solid #999; font: inherit; color: #333; }
.features input::placeholder { color: #a0a0a0; font-style: italic; }
.scroll { flex: 1; border-right: 6px solid #f7f7f7; padding-right: 20px; }
.tree li { display: flex; align-items: center; height: 26px; }
.tree .root { height: 18px; padding-left: 9px; gap: 4px; }
.tree .root svg { width: 12px; }
.tree .leaf { padding-left: 31px; gap: 6px; color: #a0a0a0; }
.tree .leaf svg { width: 14px; }
.tree .import { padding-left: 7px; gap: 5px; }
.tree .import svg { width: 14px; }
.rollback { height: 7px; margin-top: 5px; background: #bfbfbf; }
.parts { height: 223px; margin-left: 6px; padding: 7px 3px 3px 0; border-top: 1px solid #cdd5dc; display: flex; flex-direction: column; }
.parts h2 { margin: 0 0 5px 4px; }
.parts li { padding: 4px 0 0 20px; }

.view { flex: 1; position: relative; display: flex; min-width: 0; }
.model { width: 100%; height: 100%; flex: 1; }
.cube { position: absolute; top: 0; right: 0; width: 180px; height: 180px; }
.face text { font: 12px "Liberation Sans", sans-serif; fill: #333; }
.face .small { font-size: 9px; }
.ax { font: 13px "Liberation Sans", sans-serif; }
.shade { position: absolute; left: 126px; top: 143px; gap: 8px; }
.shade .caret { border-width: 4px 4px 0; }

/* document tabs */
.sheets { display: flex; height: 29px; padding-left: 9px; gap: 3px; background: #cdcdcd; font-size: 14px; }
.sheets .ib { height: 29px; margin-top: 1px; }
.sheets .plus { margin: 1px 13px 0 17px; }
.sheet { display: flex; gap: 3px; width: 199px; height: 27px; padding: 0 9px 2px; align-items: center; background: #e8e8e8; color: #666; border-radius: 0 0 5px 5px; white-space: nowrap; }
.sheet svg { width: 18px; height: 18px; }
.sheet.current { background: #fff; color: #333; border-bottom: 3px solid #2b5797; padding-top: 1px; padding-bottom: 0; border-radius: 0 0 2px 2px; }
```
